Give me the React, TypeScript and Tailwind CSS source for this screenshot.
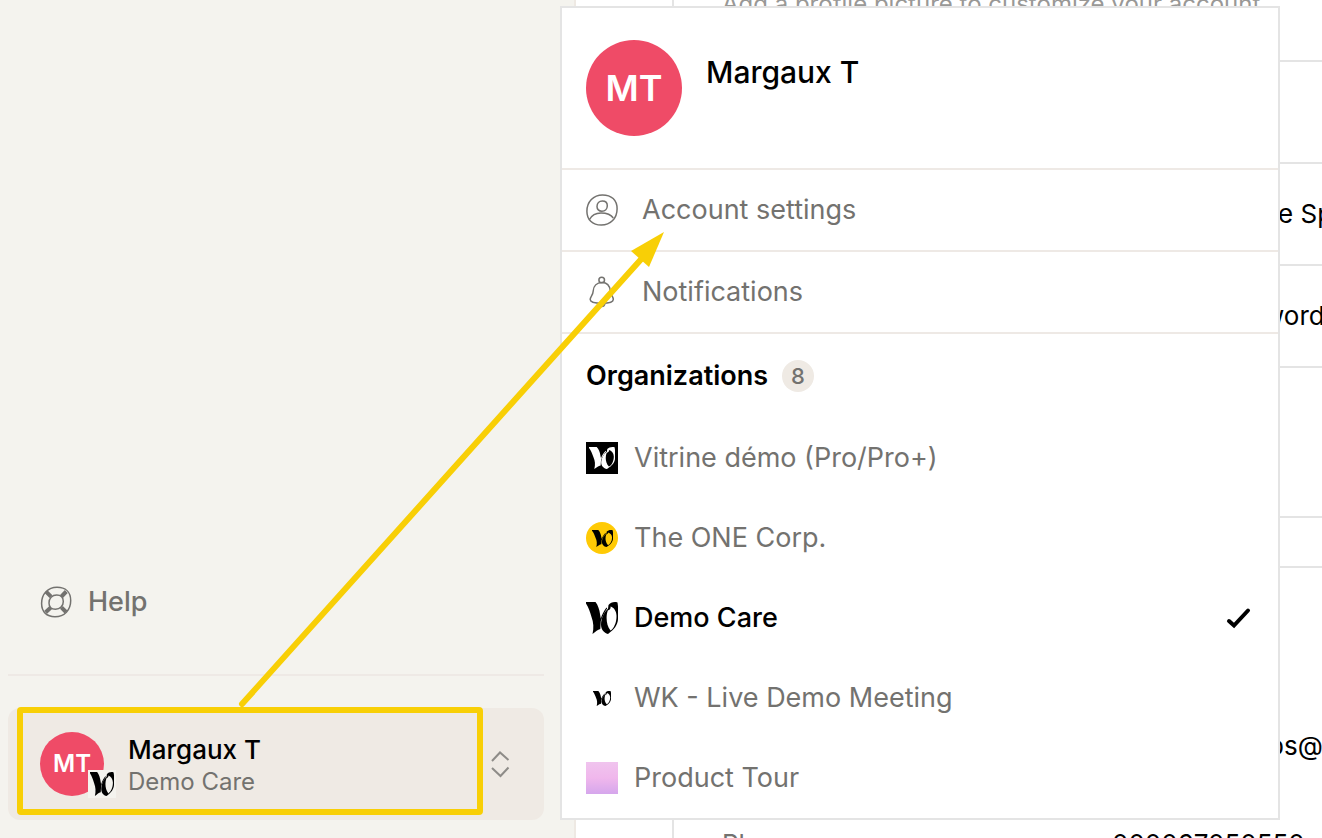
import type { ReactNode } from "react";

function LogoMark({ className }: { className: string }) {
  return (
    <svg viewBox="0 0 32 32" className={className} fill="currentColor" preserveAspectRatio="none" aria-hidden="true">
      <path d="M0 0 H9.500 C12 3 13.500 8 14 12 C14.300 14 14.600 15 14.800 16.500 C16 12.500 18 8.500 20.500 5.500 L21.200 6.200 C18.500 10 16.500 14.500 14.800 19 L14.300 27 C11.500 27.500 10 29.500 6.500 32 C8 26 7.500 20 5.500 15 C4 10 2.500 5 0 1.500 Z" />
      <path
        fillRule="evenodd"
        d="M22.500 3 C24.500 0.500 28 -0.500 31.500 0.500 C32.500 7 32.500 13 31.800 19 C30.500 25.500 26 29 22 32 C18 31 15 27.500 15 22.500 C15.200 16 18.500 9.500 22 6.800 Z M21.800 8.500 C19.800 14 20 23 24.500 28.500 C28 26.500 30.800 20 30.500 13.500 C30.300 9 28 5.500 24.500 4.500 C25 7 23.500 7.500 21.800 8.500 Z"
      />
    </svg>
  );
}

function UserIcon() {
  return (
    <svg viewBox="0 0 32 32" className="size-8" fill="none" stroke="currentColor" strokeWidth="1.500" aria-hidden="true">
      <path d="M16.500 0.900 C25.500 0.900 31.100 6 31.100 14.800 C31.100 24.500 24.500 31.100 15.300 31.100 C6.300 31.100 0.900 25.500 0.900 17.200 C0.900 7.800 7.500 0.900 16.500 0.900 Z" />
      <path d="M16.300 7 C19.500 7 21.300 8.800 21.300 11.700 C21.300 15 19 17.200 15.900 17.200 C12.800 17.200 11 15.300 11 12.500 C11 9.200 13.200 7 16.300 7 Z" />
      <path d="M3.500 25.500 C5.500 21.500 9.500 18.900 15 18.900 C21 18.900 25 20.500 27.300 24" />
    </svg>
  );
}

function BellIcon() {
  return (
    <svg viewBox="0 0 32 32" className="size-8" fill="none" stroke="currentColor" strokeWidth="1.500" aria-hidden="true">
      <circle cx="15.700" cy="4" r="2.800" />
      <path d="M16 6.600 C10.500 6.600 7.500 10.200 7.200 15 C7 19.500 4.200 20.500 4.200 23.500 C4.200 26 9 27.300 16 27.300 C22.500 27.300 27.300 26 27.300 23.500 C27.300 20.500 24.800 19.500 24.300 15 C23.800 10 21.500 6.600 16 6.600 Z" />
      <path d="M12.500 27.500 C13 29.500 14.500 30.500 15.800 30.500 C17.300 30.500 18.500 29.500 19 27.500" />
    </svg>
  );
}

function HelpIcon() {
  return (
    <svg viewBox="0 0 32 32" className="size-8" fill="none" stroke="currentColor" aria-hidden="true">
      <path strokeWidth="1.500" d="M17 1.300 C25.500 1.300 30.700 6 30.700 14.500 C30.700 24 24.500 30.700 15 30.700 C6.500 30.700 1.600 25.500 1.600 17.500 C1.600 8 8 1.300 17 1.300 Z" />
      <path strokeWidth="1.500" d="M16.700 9 C21 9 23.300 11.500 23.300 15.400 C23.300 20 20 23.300 15.500 23.300 C11.300 23.300 9 20.700 9 17 C9 12.300 12 9 16.700 9 Z" />
      <path strokeWidth="4" d="M6 5.700 L11 10.700 M26.300 5.500 L21.500 10.500 M5.700 26.300 L10.800 21.500 M26 26 L21.400 21.300" />
    </svg>
  );
}

function Row({ children, height, valueClass }: { children?: ReactNode; height: string; valueClass?: string }) {
  return (
    <div className={`flex items-center overflow-hidden whitespace-nowrap border-t-2 border-[#e4e4e4] pl-12 ${height}`}>
      <span className={valueClass}>{children}</span>
    </div>
  );
}

function ProfilePage() {
  return (
    <main className="min-w-0 flex-1 overflow-hidden bg-white pl-24 text-[26px] leading-8">
      <section className="border-b-2 border-l-2 border-[#e4e4e4]">
        <p className="-mt-3 mb-10 h-8 whitespace-nowrap pl-12 text-[24px] text-[#999896]">
          Add a profile picture to customize your account
        </p>
        <Row height="h-[102px]" />
        <Row height="h-[102px]" valueClass="pl-[556px]">e Sp</Row>
        <Row height="h-[102px]" valueClass="pl-[541px]">word</Row>
        <Row height="h-[150px]" />
      </section>
      <section className="mt-12 border-l-2 border-[#e4e4e4]">
        <Row height="h-[132px]" />
        <div className="h-[98px] overflow-hidden pl-[594px] pt-8">ps@</div>
        <div className="flex whitespace-nowrap pl-12 pt-8">
          <span className="w-[390px] shrink-0 text-[#73726f]">Phone</span>
          <span>000067050550</span>
        </div>
      </section>
    </main>
  );
}

function Sidebar() {
  return (
    <aside className="flex w-[576px] shrink-0 flex-col justify-end border-r-2 border-[#eee9e3] bg-[#f4f3ee] pb-[18px] pl-2 pr-[30px]">
      <a href="#help" className="mb-14 ml-8 flex items-center gap-4 text-[27px] font-medium leading-8 text-[#73726f]">
        <HelpIcon />
        Help
      </a>
      <hr className="mb-8 border-t-2 border-[#eee9e5]" />
      <button type="button" className="flex h-28 items-center rounded-xl bg-[#efeae4] px-8 text-left">
        <span className="relative flex size-16 items-center justify-center rounded-full bg-[#ef4b67] text-[24px] font-semibold text-white">
          MT
          <span className="absolute -bottom-0.5 -right-3 flex size-7 items-center justify-center bg-[#f4f3ee] text-black">
            <LogoMark className="size-6" />
          </span>
        </span>
        <span className="ml-6 flex flex-1 flex-col pt-1">
          <span className="text-[26px] font-medium leading-8 text-black">Margaux T</span>
          <span className="text-[24px] leading-8 text-[#73726f]">Demo Care</span>
        </span>
        <svg viewBox="0 0 24 32" className="h-8 w-6" fill="none" stroke="#8e8c88" strokeWidth="2" aria-hidden="true">
          <path d="M4 13 L12 4.500 L20.500 12 M4 20 L12.500 28 L20.500 19.500" />
        </svg>
      </button>
    </aside>
  );
}

type Org = { name: string; icon: ReactNode; active?: boolean };

const organizations: Org[] = [
  {
    name: "Vitrine démo (Pro/Pro+)",
    icon: <span className="flex size-8 items-center justify-center bg-black text-white"><LogoMark className="h-[22px] w-[26px]" /></span>,
  },
  {
    name: "The ONE Corp.",
    icon: <span className="flex size-8 items-center justify-center rounded-full bg-[#ffca05] text-black"><LogoMark className="h-[17px] w-[21px]" /></span>,
  },
  { name: "Demo Care", icon: <LogoMark className="size-8" />, active: true },
  {
    name: "WK - Live Demo Meeting",
    icon: <span className="flex size-8 items-center justify-center text-black"><LogoMark className="h-[15px] w-[18px]" /></span>,
  },
  {
    name: "Product Tour",
    icon: <span className="size-8 bg-linear-to-b from-[#f0c4ee] via-[#f0b7ec] to-[#d5a6ec]" />,
  },
];

function AccountMenu() {
  return (
    <div className="absolute left-[560px] top-1.5 flex w-[720px] flex-col border-2 border-[#e4e4e4] bg-white">
      <header className="flex h-[162px] items-center border-b-2 border-[#eee9e5] px-6">
        <span className="flex size-24 items-center justify-center rounded-full bg-[#ef4b67] text-[36px] font-semibold text-white">MT</span>
        <h2 className="mb-8 ml-6 text-[30px] font-medium leading-10">Margaux T</h2>
      </header>
      <a href="#account" className="flex h-[82px] items-center gap-6 border-b-2 border-[#eee9e5] px-6 text-[#73726f]">
        <UserIcon />
        Account settings
      </a>
      <a href="#notifications" className="flex h-[82px] items-center gap-6 border-b-2 border-[#eee9e5] px-6 text-[#73726f]">
        <BellIcon />
        Notifications
      </a>
      <h3 className="flex h-[84px] items-center gap-3.5 px-6 font-semibold">
        Organizations
        <span className="flex size-8 items-center justify-center rounded-full bg-[#efeae4] text-[22px] font-medium text-[#73726f]">8</span>
      </h3>
      <ul>
        {organizations.map((org) => (
          <li key={org.name}>
            <button
              type="button"
              className={`flex h-20 w-full items-center gap-4 px-6 text-left ${org.active ? "font-medium text-black" : "text-[#73726f]"}`}
            >
              {org.icon}
              <span className="flex-1">{org.name}</span>
              {org.active && (
                <svg viewBox="0 0 32 32" className="size-8" fill="none" stroke="currentColor" strokeWidth="4" strokeLinecap="round" aria-hidden="true">
                  <path d="M7 19 L12 23.500 L26 8.500" />
                </svg>
              )}
            </button>
          </li>
        ))}
      </ul>
    </div>
  );
}

export default function App() {
  return (
    <div className="relative flex h-screen overflow-hidden bg-white font-['Inter',sans-serif] text-[27px] leading-8 text-black">
      <Sidebar />
      <ProfilePage />
      <AccountMenu />
      <svg className="pointer-events-none absolute left-0 top-0 h-[838px] w-[664px]" viewBox="0 0 664 838" fill="none" aria-hidden="true">
        <rect x="20" y="710" width="460" height="102" rx="1" stroke="#f8cf06" strokeWidth="6" />
        <path d="M242 704 L644 256" stroke="#f8cf06" strokeWidth="6" strokeLinecap="round" />
        <path d="M664 232 L631 251 L649 267 Z" fill="#f8cf06" />
      </svg>
    </div>
  );
}
